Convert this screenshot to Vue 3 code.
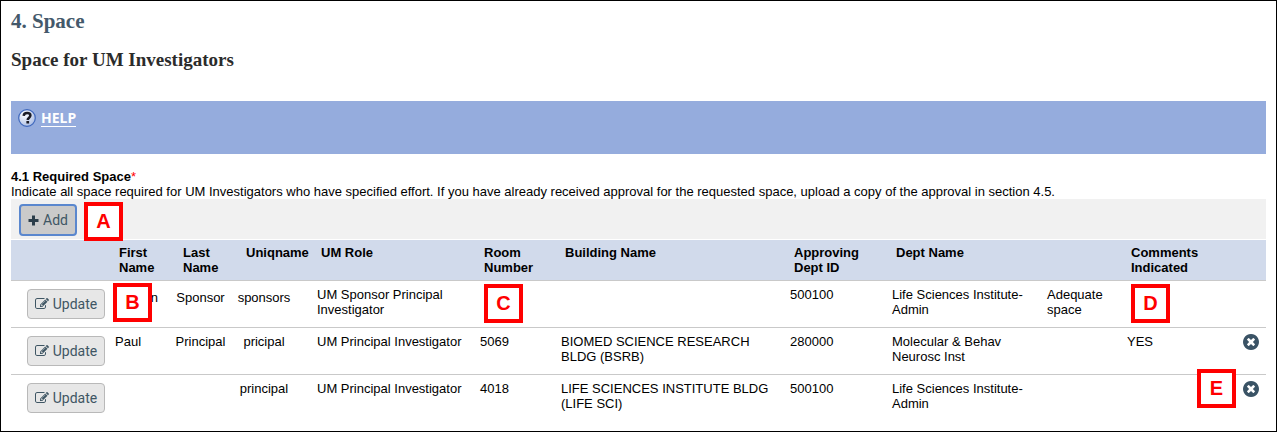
<script setup>
const rows = [
  {
    first: 'n', last: 'Sponsor', uniqname: 'sponsors', role: 'UM Sponsor Principal Investigator',
    room: '', building: '', deptId: '500100', dept: 'Life Sciences Institute-Admin',
    note: 'Adequate space', comments: '', removable: false, lowered: true,
    marks: { first: 'B', room: 'C', comments: 'D' },
  },
  {
    first: 'Paul', last: 'Principal', uniqname: 'pricipal', role: 'UM Principal Investigator',
    room: '5069', building: 'BIOMED SCIENCE RESEARCH BLDG (BSRB)', deptId: '280000',
    dept: 'Molecular & Behav Neurosc Inst', note: '', comments: 'YES', removable: true,
    lowered: false, marks: {},
  },
  {
    first: '', last: '', uniqname: 'principal', role: 'UM Principal Investigator',
    room: '4018', building: 'LIFE SCIENCES INSTITUTE BLDG (LIFE SCI)', deptId: '500100',
    dept: 'Life Sciences Institute-Admin', note: '', comments: '', removable: true,
    lowered: false, marks: { remove: 'E' },
  },
]
</script>

<template>
  <main class="page">
    <h1>4. Space</h1>
    <h2>Space for UM Investigators</h2>

    <div class="help">
      <svg class="help-icon" viewBox="0 0 18 18" aria-hidden="true">
        <defs>
          <radialGradient id="help-fill" cx="35%" cy="30%" r="75%">
            <stop offset="0" stop-color="#ffffff" />
            <stop offset="1" stop-color="#a9bce4" />
          </radialGradient>
        </defs>
        <circle cx="9" cy="9" r="8.3" fill="url(#help-fill)" stroke="#3f68bd" stroke-width="1.2" />
        <path d="M5.7 6.900C5.800 4.700 7.200 4.100 9.100 4.100c2 0 3.300 1 3.300 2.500 0 2-2.700 2.200-2.700 4.400" fill="none" stroke="#1b1b24" stroke-width="2.500" />
        <rect x="8.400" y="12" width="2.700" height="2.500" fill="#1b1b24" />
      </svg>
      <a href="#help">HELP</a>
    </div>

    <section>
      <h3>4.1 Required Space<span class="required">*</span></h3>
      <p class="hint">Indicate all space required for UM Investigators who have specified effort. If you have already received approval for the requested space, upload a copy of the approval in section 4.5.</p>

      <div class="toolbar">
        <button type="button" class="btn btn-add">
          <svg class="plus" viewBox="0 0 11 11" aria-hidden="true"><path d="M4 .5h3V4h3.500v3H7v3.500H4V7H.5V4H4z" fill="#2c3e4a" /></svg>
          <span>Add</span>
        </button>
        <span class="mark">A</span>
      </div>

      <table>
        <colgroup>
          <col class="c-action"><col class="c-first"><col class="c-last"><col class="c-uniq">
          <col class="c-role"><col class="c-room"><col class="c-building"><col class="c-deptid">
          <col class="c-dept"><col class="c-note"><col class="c-comments"><col class="c-remove">
        </colgroup>
        <thead>
          <tr>
            <th></th>
            <th>First<br>Name</th>
            <th class="name">Last<br>Name</th>
            <th class="name">Uniqname</th>
            <th>UM Role</th>
            <th>Room<br>Number</th>
            <th>Building Name</th>
            <th>Approving<br>Dept ID</th>
            <th>Dept Name</th>
            <th></th>
            <th>Comments<br>Indicated</th>
            <th></th>
          </tr>
        </thead>
        <tbody>
          <tr v-for="(row, i) in rows" :key="i" :class="{ lowered: row.lowered }">
            <td class="action">
              <button type="button" class="btn">
                <svg class="edit" viewBox="0 0 1792 1792" aria-hidden="true">
                  <path fill="#3f5664" d="M888 1184l116-116-152-152-116 116v56h96v96h56zm440-720q-16-16-33 1l-350 350q-17 17-1 33t33-1l350-350q17-17 1-33zm80 594v190q0 119-84.5 203.5t-203.5 84.5h-832q-119 0-203.5-84.5t-84.5-203.5v-832q0-119 84.5-203.5t203.5-84.5h832q63 0 117 25 15 7 18 23 3 17-9 29l-49 49q-14 14-32 8-23-6-45-6h-832q-66 0-113 47t-47 113v832q0 66 47 113t113 47h832q66 0 113-47t47-113v-126q0-13 9-22l64-64q15-15 35-7t20 29zm-96-738l288 288-672 672h-288v-288zm444 132l-92 92-288-288 92-92q28-28 68-28t68 28l152 152q28 28 28 68t-28 68z" />
                </svg>
                <span>Update</span>
              </button>
            </td>
            <td class="first">{{ row.first }}<span v-if="row.marks.first" class="mark">{{ row.marks.first }}</span></td>
            <td class="last">{{ row.last }}</td>
            <td class="uniq">{{ row.uniqname }}</td>
            <td>{{ row.role }}</td>
            <td class="room">{{ row.room }}<span v-if="row.marks.room" class="mark">{{ row.marks.room }}</span></td>
            <td>{{ row.building }}</td>
            <td>{{ row.deptId }}</td>
            <td class="dept">{{ row.dept }}</td>
            <td>{{ row.note }}</td>
            <td class="comments">{{ row.comments }}<span v-if="row.marks.comments" class="mark">{{ row.marks.comments }}</span></td>
            <td class="remove">
              <button v-if="row.removable" type="button" class="btn-remove" aria-label="Remove">
                <svg viewBox="128 128 1536 1536" aria-hidden="true">
                  <path fill="#3a5365" d="M1277 1122q0-26-19-45l-181-181 181-181q19-19 19-45 0-27-19-46l-90-90q-19-19-46-19-26 0-45 19l-181 181-181-181q-19-19-45-19-27 0-46 19l-90 90q-19 19-19 46 0 26 19 45l181 181-181 181q-19 19-19 45 0 27 19 46l90 90q19 19 46 19 26 0 45-19l181-181 181 181q19 19 45 19 27 0 46-19l90-90q19-19 19-46zm387-226q0 209-103 385.500t-279.500 279.500-385.500 103-385.500-103-279.500-279.500-103-385.500 103-385.500 279.500-279.500 385.500-103 385.500 103 279.500 279.500 103 385.500z" />
                </svg>
              </button>
              <span v-if="row.marks.remove" class="mark">{{ row.marks.remove }}</span>
            </td>
          </tr>
        </tbody>
      </table>
    </section>
  </main>
</template>

<style>
body {
  background: #fff;
}
</style>

<style scoped>
.page {
  box-sizing: border-box;
  min-height: 100vh;
  padding: 8px 10px;
  border: 1px solid #000;
  color: #000;
  font: 13px/15px "Liberation Sans", Arial, sans-serif;
}

h1,
h2 {
  margin: 0;
  font-family: "Liberation Serif", "Times New Roman", serif;
  font-weight: bold;
}

h1 {
  color: #44596b;
  font-size: 21px;
  line-height: 24px;
}

h2 {
  margin-top: 16px;
  color: #2b2b2b;
  font-size: 19px;
  line-height: 22px;
}

.help {
  display: flex;
  align-items: flex-start;
  gap: 5px;
  box-sizing: border-box;
  min-height: 53px;
  margin-top: 30px;
  padding: 8px 7px;
  background: #95acdd;
}

.help-icon {
  width: 18px;
  height: 18px;
}

.help a {
  border-bottom: 1px solid #fff;
  color: #fff;
  font: bold 14px/17px "Noto Sans", sans-serif;
  text-decoration: none;
}

h3 {
  margin: 15px 0 0;
  font-size: 13px;
  line-height: 15px;
}

.required {
  color: #f00;
  font-weight: normal;
}

.hint {
  margin: 0;
}

.toolbar {
  position: relative;
  box-sizing: border-box;
  height: 40px;
  padding: 5px 8px;
  background: #f1f1f1;
}

.btn {
  display: inline-flex;
  align-items: center;
  justify-content: center;
  gap: 4px;
  box-sizing: border-box;
  width: 78px;
  height: 30px;
  padding: 0;
  border: 1px solid #b9b9b9;
  border-radius: 4px;
  background: #e7e7e7;
  color: #3f5664;
  font: 14px/20px Roboto, sans-serif;
}

.btn-add {
  width: 58px;
  height: 32px;
  border: 2px solid #5a87ce;
  background: #cacaca;
}

.plus {
  width: 11px;
  height: 11px;
}

.edit {
  width: 14px;
  height: 14px;
}

table {
  width: 100%;
  margin-top: 1px;
  border-collapse: separate;
  border-spacing: 0;
  table-layout: fixed;
}

.c-action { width: 100px; }
.c-first { width: 60px; }
.c-last { width: 63px; }
.c-uniq { width: 79px; }
.c-role { width: 163px; }
.c-room { width: 81px; }
.c-deptid { width: 102px; }
.c-dept { width: 155px; }
.c-note { width: 80px; }
.c-comments { width: 104px; }
.c-remove { width: 39px; }

th,
td {
  position: relative;
  height: 34px;
  text-align: left;
  vertical-align: top;
}

th {
  padding: 5px 0 1px 8px;
  border-bottom: 1px solid #c9c9c9;
  background: #d1daeb;
}

th.name {
  padding-left: 12px;
}

td {
  height: 30px;
  padding: 6px 4px 0;
}

tr + tr td {
  border-top: 1px solid #c9c9c9;
}

td.action {
  height: 38px;
  padding: 8px 0 0 16px;
}

td.last {
  padding: 6px 4px 0 0;
  text-align: center;
}

td.uniq {
  padding: 6px 19px 0 0;
  text-align: center;
}

.lowered td.first {
  padding: 9px 13px 0 0;
  text-align: right;
}

.lowered td.last,
.lowered td.uniq {
  padding-top: 9px;
}

td.dept {
  padding-right: 16px;
}

td.remove {
  padding: 6px 7px 0 0;
  text-align: right;
}

.btn-remove {
  display: inline-block;
  width: 16px;
  height: 16px;
  padding: 0;
  border: 0;
  background: none;
}

.btn-remove svg {
  display: block;
  width: 16px;
  height: 16px;
}

.mark {
  position: absolute;
  z-index: 1;
  box-sizing: border-box;
  width: 39px;
  height: 39px;
  border: 4px solid #f00;
  background: #fff;
  color: #f00;
  font: bold 20px/30px "Liberation Sans", Arial, sans-serif;
  text-align: center;
}

.toolbar .mark {
  top: 3px;
  left: 73px;
}

.first .mark {
  top: 2px;
  left: 2px;
}

.room .mark {
  top: 3px;
  left: 8px;
}

.comments .mark {
  top: 3px;
  left: 8px;
}

.remove .mark {
  top: -6px;
  right: 30px;
}
</style>
